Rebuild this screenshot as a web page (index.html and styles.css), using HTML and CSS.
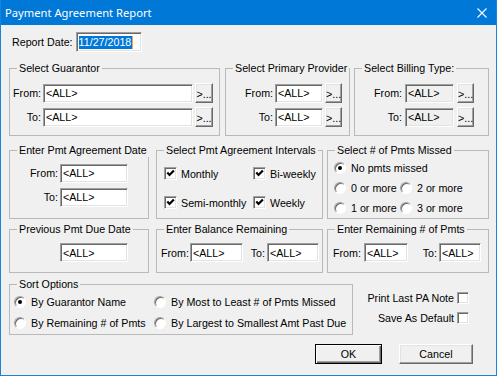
FILE: index.html
```html
<!DOCTYPE html>
<html lang="en">
<head>
    <meta charset="UTF-8">
    <title>Payment Agreement Report</title>
    <link rel="stylesheet" href="styles.css">
</head>
<body>
<div class="window">
    <div class="titlebar">
        <span class="title">Payment Agreement Report</span>
        <svg class="close" width="10" height="10" viewBox="0 0 10 10">
            <path d="M0.5 0.5 L9.5 9.5 M9.5 0.5 L0.5 9.5" stroke="#fff" stroke-width="1.1" fill="none"/>
        </svg>
    </div>

    <div class="content">
        <div class="report-date">
            <label>Report Date:</label>
            <span class="edit date"><span class="sel">11/27/2018</span></span>
        </div>

        <!-- row 1: guarantor / provider / billing type -->
        <div class="row row1">
            <div class="group g-guar">
                <div class="group-title">Select Guarantor</div>
                <div class="pick pick-guar">
                    <label>From:</label><input class="edit" value="&lt;ALL&gt;" readonly><button class="btn dots">&gt;...</button>
                    <label>To:</label><input class="edit" value="&lt;ALL&gt;" readonly><button class="btn dots">&gt;...</button>
                </div>
            </div>
            <div class="group g-prov">
                <div class="group-title">Select Primary Provider</div>
                <div class="pick pick-prov">
                    <label>From:</label><input class="edit" value="&lt;ALL&gt;" readonly><button class="btn dots">&gt;...</button>
                    <label>To:</label><input class="edit" value="&lt;ALL&gt;" readonly><button class="btn dots">&gt;...</button>
                </div>
            </div>
            <div class="group g-bill">
                <div class="group-title">Select Billing Type:</div>
                <div class="pick pick-bill">
                    <label>From:</label><input class="edit off" value="&lt;ALL&gt;" readonly><button class="btn dots">&gt;...</button>
                    <label>To:</label><input class="edit off" value="&lt;ALL&gt;" readonly><button class="btn dots">&gt;...</button>
                </div>
            </div>
        </div>

        <!-- row 2: agreement date / intervals / missed -->
        <div class="row row2">
            <div class="group col-a">
                <div class="group-title">Enter Pmt Agreement Date</div>
                <div class="pick pick-date">
                    <label>From:</label><input class="edit" value="&lt;ALL&gt;" readonly>
                    <label>To:</label><input class="edit" value="&lt;ALL&gt;" readonly>
                </div>
            </div>
            <div class="group col-b">
                <div class="group-title">Select Pmt Agreement Intervals</div>
                <div class="checks">
                    <div class="opt"><span class="check on"></span>Monthly</div>
                    <div class="opt"><span class="check on"></span>Bi-weekly</div>
                    <div class="opt"><span class="check on"></span>Semi-monthly</div>
                    <div class="opt"><span class="check on"></span>Weekly</div>
                </div>
            </div>
            <div class="group col-c">
                <div class="group-title">Select # of Pmts Missed</div>
                <div class="radios missed">
                    <div class="opt wide"><span class="radio on"></span>No pmts missed</div>
                    <div class="opt"><span class="radio"></span>0 or more</div>
                    <div class="opt"><span class="radio"></span>2 or more</div>
                    <div class="opt"><span class="radio"></span>1 or more</div>
                    <div class="opt"><span class="radio"></span>3 or more</div>
                </div>
            </div>
        </div>

        <!-- row 3: due date / balance / remaining -->
        <div class="row row3">
            <div class="group col-a">
                <div class="group-title">Previous Pmt Due Date</div>
                <div class="single">
                    <input class="edit" value="&lt;ALL&gt;" readonly>
                </div>
            </div>
            <div class="group col-b">
                <div class="group-title">Enter Balance Remaining</div>
                <div class="range range-bal">
                    <label>From:</label><input class="edit" value="&lt;ALL&gt;" readonly>
                    <label class="to">To:</label><input class="edit" value="&lt;ALL&gt;" readonly>
                </div>
            </div>
            <div class="group col-c">
                <div class="group-title">Enter Remaining # of Pmts</div>
                <div class="range range-rem">
                    <label>From:</label><input class="edit" value="&lt;ALL&gt;" readonly>
                    <label class="to">To:</label><input class="edit" value="&lt;ALL&gt;" readonly>
                </div>
            </div>
        </div>

        <!-- row 4: sort + flags -->
        <div class="row row4">
            <div class="group g-sort">
                <div class="group-title">Sort Options</div>
                <div class="radios sort">
                    <div class="opt"><span class="radio on"></span>By Guarantor Name</div>
                    <div class="opt"><span class="radio"></span>By Most to Least # of Pmts Missed</div>
                    <div class="opt"><span class="radio"></span>By Remaining # of Pmts</div>
                    <div class="opt"><span class="radio"></span>By Largest to Smallest Amt Past Due</div>
                </div>
            </div>
            <div class="flags">
                <div class="flag">Print Last PA Note<span class="check"></span></div>
                <div class="flag">Save As Default<span class="check"></span></div>
            </div>
        </div>

        <div class="buttons">
            <button class="btn push default">OK</button>
            <button class="btn push">Cancel</button>
        </div>
    </div>
</div>
</body>
</html>
```

FILE: styles.css
```css
body {
    margin: 0;
    font-family: "Liberation Sans", Arial, sans-serif;
    font-size: 10.7px;
    color: #000;
}

.window {
    width: 497px;
    height: 376px;
    box-sizing: border-box;
    border: 1px solid #1883d7;
    border-top: 0;
    background: #f0f0f0;
}

.titlebar {
    height: 25px;
    background: #0078d7;
    color: #fff;
    display: flex;
    align-items: center;
    justify-content: space-between;
    padding: 0 9px 0 4px;
    font-family: "Noto Sans", sans-serif;
    font-size: 11.2px;
}

.content {
    padding: 7px 7px 0 8px;
}

/* report date */
.report-date {
    display: flex;
    align-items: center;
    height: 20px;
    padding-left: 3px;
}

.report-date label {
    margin-right: 3px;
}

/* sunken edit box */
.edit {
    box-sizing: border-box;
    height: 19px;
    margin: 0;
    padding: 0 0 0 2px;
    border: 1px solid;
    border-color: #a0a0a0 #fff #fff #a0a0a0;
    box-shadow: inset 1px 1px #696969, inset -1px -1px #e3e3e3;
    background: #fff;
    font: inherit;
    color: #000;
    outline: none;
}

.edit.off {
    background: #f0f0f0;
}

.date {
    display: flex;
    align-items: center;
    width: 66px;
    height: 20px;
    padding-left: 2px;
}

.sel {
    background: #0078d7;
    color: #fff;
    line-height: 13px;
    padding: 0 1px 0 0;
    border-right: 1px solid #f7a15a;
}

/* raised button */
.btn {
    box-sizing: border-box;
    margin: 0;
    padding: 0;
    border: 1px solid;
    border-color: #fff #696969 #696969 #fff;
    box-shadow: inset -1px -1px #a0a0a0, inset 1px 1px #e3e3e3;
    background: #f0f0f0;
    font: inherit;
    color: #000;
}

.dots {
    width: 18px;
    height: 20px;
    padding-top: 2px;
}

/* group box */
.row {
    display: flex;
    align-items: flex-start;
}

.group {
    box-sizing: border-box;
    border: 1px solid #b9b9b9;
    flex: none;
}

.group-title {
    width: max-content;
    margin: -7px 0 0 7px;
    padding: 0 2px;
    line-height: 13px;
    background: #f0f0f0;
}

.row1 {
    margin-top: 16px;
}

.g-guar { width: 211px; height: 68px; }
.g-prov { width: 125px; height: 68px; margin-left: 5px; }
.g-bill { width: 135px; height: 68px; margin-left: 4px; }

.pick {
    display: grid;
    grid-auto-rows: 20px;
    row-gap: 4px;
    column-gap: 2px;
    align-items: center;
    margin-top: 8px;
}

.pick label {
    text-align: right;
}

.pick-guar { grid-template-columns: 31px 150px 18px; }
.pick-prov { grid-template-columns: 47px 48px 17px; }
.pick-bill { grid-template-columns: 47px 49px 17px; column-gap: 3px; }
.pick-prov .dots, .pick-bill .dots { width: 17px; }

.row2 {
    margin-top: 14px;
}

.row2 .group { height: 69px; }
.col-a { width: 140px; }
.col-b { width: 167px; margin-left: 7px; }
.col-c { width: 162px; margin-left: 4px; }

.pick-date {
    grid-template-columns: 48px 68px;
    margin-top: 6px;
}

/* check boxes and radios */
.opt {
    display: flex;
    align-items: center;
    white-space: nowrap;
}

.check {
    box-sizing: border-box;
    width: 13px;
    height: 13px;
    border: 1px solid;
    border-color: #a0a0a0 #fff #fff #a0a0a0;
    box-shadow: inset 1px 1px #696969, inset -1px -1px #e3e3e3;
    background: #fff no-repeat center;
    flex: none;
}

.check.on {
    background-image: url("data:image/svg+xml,%3Csvg xmlns='http://www.w3.org/2000/svg' width='9' height='9'%3E%3Cpath d='M1.3 3.6 L3.5 6 L7.9 1.4' stroke='%23000' stroke-width='2.2' fill='none'/%3E%3C/svg%3E");
}

.checks {
    display: grid;
    grid-template-columns: 89px auto;
    grid-auto-rows: 13px;
    row-gap: 16px;
    margin-top: 10px;
    padding-left: 7px;
}

.checks .check {
    margin-right: 4px;
}

.radio {
    box-sizing: border-box;
    width: 12px;
    height: 12px;
    margin-right: 5px;
    border-radius: 50%;
    border: 1px solid;
    border-color: #a0a0a0 #fff #fff #a0a0a0;
    box-shadow: inset 1px 1px #696969;
    background: #fff;
    flex: none;
    display: flex;
    align-items: center;
    justify-content: center;
}

.radio.on::after {
    content: "";
    width: 4px;
    height: 4px;
    border-radius: 50%;
    background: #000;
}

.radios {
    display: grid;
    grid-auto-rows: 14px;
}

.missed {
    grid-template-columns: 66px auto;
    row-gap: 6px;
    margin-top: 4px;
    padding-left: 6px;
}

.missed .wide {
    grid-column: 1 / 3;
}

.row3 {
    margin-top: 10px;
}

.row3 .group { height: 44px; }

.single {
    margin-top: 7px;
    padding-left: 50px;
}

.single .edit { width: 68px; }

.range {
    display: grid;
    align-items: center;
    margin-top: 7px;
}

.range .to {
    text-align: right;
    padding-right: 2px;
}

.range-bal { grid-template-columns: 29px 53px 24px 52px; padding-left: 4px; }
.range-rem { grid-template-columns: 31px 44px 31px 42px; padding-left: 5px; }

.row4 {
    margin-top: 11px;
}

.g-sort {
    width: 344px;
    height: 51px;
}

.sort {
    grid-template-columns: 140px auto;
    row-gap: 7px;
    margin-top: 4px;
    padding-left: 4px;
}

.flags {
    flex: 1;
    display: flex;
    flex-direction: column;
    align-items: flex-end;
    row-gap: 8px;
    padding: 8px 20px 0 0;
}

.flag {
    display: flex;
    align-items: center;
    height: 12px;
}

.flag .check {
    width: 12px;
    height: 12px;
    margin-left: 3px;
}

.buttons {
    display: flex;
    justify-content: flex-end;
    column-gap: 17px;
    margin-top: 9px;
    padding-right: 16px;
}

.push {
    height: 20px;
    width: 74px;
}

.push.default {
    width: 67px;
    border-color: #000;
    box-shadow: inset 1px 1px #fff, inset -1px -1px #696969, inset -2px -2px #a0a0a0;
}
```
